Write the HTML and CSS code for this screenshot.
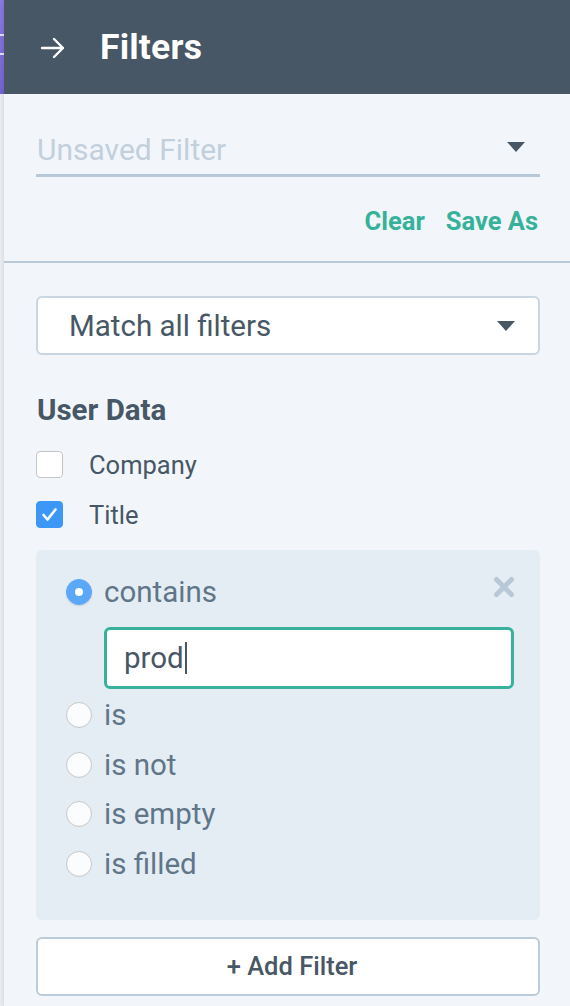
FILE: index.html
```html
<!DOCTYPE html>
<html>
<head>
<meta charset="utf-8">
<link rel="stylesheet" href="styles.css">
</head>
<body>
<div class="page">
  <div class="strip"><div class="strip-top"><span class="tick"></span><span class="tick"></span></div><div class="strip-rest"></div></div>
  <div class="panel">
    <header class="header">
      <svg class="back" width="26" height="22" viewBox="0 0 26 22"><path d="M2 11 H23 M14 2 L23 11 L14 20" fill="none" stroke="#fff" stroke-width="2.4" stroke-linecap="round" stroke-linejoin="round"/></svg>
      <h1 class="title">Filters</h1>
    </header>
    <section class="top">
      <div class="saved">
        <span class="placeholder">Unsaved Filter</span>
        <span class="caret caret-saved"></span>
      </div>
      <div class="actions">
        <a class="action">Clear</a>
        <a class="action">Save As</a>
      </div>
    </section>
    <section class="main">
      <div class="select">
        <span>Match all filters</span>
        <span class="caret"></span>
      </div>
      <h2 class="group">User Data</h2>
      <div class="checks">
        <label class="check-row"><span class="box"></span><span>Company</span></label>
        <label class="check-row"><span class="box checked"><svg width="27" height="27" viewBox="0 0 27 27"><path d="M7.5 14 L11.5 18.5 L19.5 8.5" fill="none" stroke="#fff" stroke-width="2.6" stroke-linecap="round" stroke-linejoin="round"/></svg></span><span>Title</span></label>
      </div>
      <div class="condition">
        <svg class="remove" width="22" height="22" viewBox="0 0 22 22"><path d="M3.5 3.5 L18.5 18.5 M18.5 3.5 L3.5 18.5" stroke="#b9c8d6" stroke-width="5" stroke-linecap="round"/></svg>
        <div class="radio-row"><span class="radio on"></span><span>contains</span></div>
        <div class="text-input"><span>prod</span><span class="cursor"></span></div>
        <div class="radio-list">
          <div class="radio-row"><span class="radio"></span><span>is</span></div>
          <div class="radio-row"><span class="radio"></span><span>is not</span></div>
          <div class="radio-row"><span class="radio"></span><span>is empty</span></div>
          <div class="radio-row"><span class="radio"></span><span>is filled</span></div>
        </div>
      </div>
      <button class="add">+ Add Filter</button>
    </section>
  </div>
</div>
</body>
</html>
```

FILE: styles.css
```css
* { box-sizing: border-box; }
html, body { margin: 0; padding: 0; }
body {
  width: 570px;
  height: 1006px;
  overflow: hidden;
  font-family: Roboto, "Liberation Sans", Arial, sans-serif;
  background: #f2f6fa;
}
.page { display: flex; height: 1006px; }
.strip { width: 4px; display: flex; flex-direction: column; }
.strip-top {
  height: 94px;
  background: linear-gradient(180deg, #8a7be0, #7565d2);
  display: flex;
  flex-direction: column;
  padding-top: 34px;
  gap: 17px;
}
.tick { display: block; height: 2px; background: rgba(255,255,255,0.8); }
.strip-rest { flex: 1; background: #eceff3; }
.panel {
  flex: 1;
  background: #f2f6fa;
  box-shadow: -2px 0 4px rgba(0, 0, 0, 0.08);
  display: flex;
  flex-direction: column;
  position: relative;
}
.header {
  height: 94px;
  background: #475766;
  display: flex;
  align-items: center;
  padding-left: 36px;
}
.back { margin-right: 34px; margin-top: 1px; }
.title {
  margin: 0;
  color: #fff;
  font-size: 35.5px;
  font-weight: 700;
  letter-spacing: 0.2px;
}
.top {
  padding: 30px 30px 0 32px;
  border-bottom: 2px solid #b9c9d8;
  height: 169px;
}
.saved {
  height: 53px;
  border-bottom: 3px solid #b7c8d8;
  display: flex;
  align-items: center;
  justify-content: space-between;
  padding-left: 1px;
  padding-right: 15px;
}
.placeholder { color: #c2cfdc; font-size: 30px; }
.caret {
  width: 0; height: 0;
  border-left: 9.5px solid transparent;
  border-right: 9.5px solid transparent;
  border-top: 10px solid #475766;
}
.caret-saved { margin-bottom: 4px; }
.actions {
  display: flex;
  justify-content: flex-end;
  gap: 21px;
  margin-top: 26px;
  line-height: 36px;
  padding-right: 2px;
}
.action { color: #36b29b; font-weight: 700; font-size: 25.5px; }
.main { padding: 33px 30px 0 32px; display: flex; flex-direction: column; }
.select {
  height: 59px;
  background: #fff;
  border: 2px solid #c9d5e0;
  border-radius: 6px;
  display: flex;
  align-items: center;
  justify-content: space-between;
  padding: 0 23px 0 31px;
  color: #475766;
  font-size: 29.5px;
}
.group {
  margin: 39px 0 0 1px;
  line-height: 32px;
  font-size: 29.5px;
  font-weight: 700;
  color: #475766;
}
.checks { display: flex; flex-direction: column; gap: 23px; margin-top: 25px; }
.check-row {
  display: flex;
  align-items: center;
  height: 27px;
  gap: 26px;
  color: #475766;
  font-size: 25.5px;
}
.box {
  width: 27px; height: 27px;
  border: 1.5px solid #c4c4c4;
  border-radius: 4px;
  background: #fff;
  display: flex;
}
.box.checked { background: #3d97f6; border-color: #3d97f6; }
.box.checked svg { margin: -1.5px; }
.condition {
  margin-top: 22px;
  background: #e5edf4;
  border-radius: 6px;
  padding: 29px 26px 43px 30px;
  position: relative;
}
.remove { position: absolute; top: 26px; right: 25px; }
.radio-row {
  display: flex;
  align-items: center;
  height: 26px;
  gap: 12px;
  color: #5f7689;
  font-size: 29.5px;
}
.radio {
  width: 26px; height: 26px;
  border-radius: 50%;
  border: 1px solid #c8c8c8;
  background: #fbfcfe;
  box-shadow: inset 0 -1px 1px rgba(0,0,0,0.04);
  flex: none;
}
.radio.on {
  background: #5ba8f8;
  border-color: #5ba8f8;
  position: relative;
  box-shadow: 0 1px 2px rgba(0,0,0,0.12);
}
.radio.on::after {
  content: "";
  position: absolute;
  left: 8px; top: 8px;
  width: 8px; height: 8px;
  border-radius: 50%;
  background: #fff;
}
.text-input {
  margin: 22px 0 0 38px;
  height: 62px;
  background: #fff;
  border: 3px solid #38b29d;
  border-radius: 6px;
  display: flex;
  align-items: center;
  padding-left: 17px;
  color: #475766;
  font-size: 29.5px;
}
.cursor { width: 2px; height: 32px; background: #475766; margin-left: 1px; }
.radio-list { display: flex; flex-direction: column; gap: 23.5px; margin-top: 13px; }
.add {
  margin-top: 17px;
  height: 59px;
  background: #fff;
  border: 2px solid #bccbd9;
  border-radius: 6px;
  font-family: inherit;
  font-size: 25.5px;
  font-weight: 500;
  color: #475766;
  padding: 0 0 0 8px;
}
```
